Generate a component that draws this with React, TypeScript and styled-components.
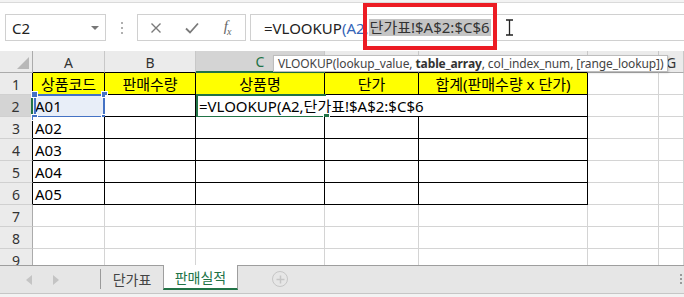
import React from 'react';
import styled, { createGlobalStyle } from 'styled-components';

const Global = createGlobalStyle`
  html, body { margin: 0; padding: 0; background: #fff; }
  body { width: 684px; height: 297px; overflow: hidden; font-family: "Noto Sans", "Noto Sans CJK KR", sans-serif; }
`;

const CELL_FONT = `"Noto Sans", "Noto Sans CJK KR", sans-serif`;
const GREEN = '#217346';
const BLUE = '#4472c4';

const Window = styled.div`
  position: relative;
  width: 684px;
  height: 297px;
  overflow: hidden;
  display: flex;
  flex-direction: column;
  background: #fff;
`;

const TopStrip = styled.div`
  height: 3px;
  background: #f3f3f3;
  border-bottom: 1px solid #dadada;
  box-sizing: border-box;
`;

const Toolbar = styled.div`
  height: 48px;
  display: flex;
  align-items: flex-start;
  padding: 11px 0 0 5px;
  box-sizing: border-box;
`;

const NameBox = styled.div`
  width: 101px;
  height: 27px;
  border: 1px solid #d0d0d0;
  box-sizing: border-box;
  display: flex;
  align-items: center;
  justify-content: space-between;
  padding: 0 6px 0 6px;
  font-family: ${CELL_FONT};
  font-size: 15px;
  color: #222;
`;

const DropTriangle = styled.span`
  width: 0;
  height: 0;
  border-left: 4px solid transparent;
  border-right: 4px solid transparent;
  border-top: 4px solid #777;
`;

const Dots = styled.div`
  width: 31px;
  height: 27px;
  display: flex;
  flex-direction: column;
  align-items: center;
  justify-content: center;
  gap: 3px;
  & > span { width: 2px; height: 2px; background: #b0b0b0; }
`;

const ButtonsBox = styled.div`
  width: 109px;
  height: 27px;
  border: 1px solid #d0d0d0;
  box-sizing: border-box;
  display: flex;
  align-items: center;
`;

const IconSlot = styled.div`
  width: 36px;
  height: 25px;
  display: flex;
  align-items: center;
  justify-content: center;
  color: #7a7a7a;
`;

const Fx = styled.span`
  font-family: "Liberation Serif", serif;
  font-style: italic;
  font-size: 15px;
  color: #666;
  letter-spacing: -1px;
`;

const FxSub = styled.sub`
  font-size: 10px;
`;

const FormulaInput = styled.div`
  flex: 1;
  height: 27px;
  margin-left: 4px;
  border: 1px solid #d0d0d0;
  border-right: none;
  box-sizing: border-box;
  display: flex;
  align-items: center;
  padding-left: 13px;
  font-family: ${CELL_FONT};
  font-size: 15px;
  color: #222;
  white-space: nowrap;
`;

const RefText = styled.span`
  color: #3465b8;
`;

const Selected = styled.span`
  display: inline-block;
  background: #c4c4c4;
  color: #333;
  line-height: 17px;
  padding: 0 1px 0 1px;
`;

const Cursor = styled.svg`
  margin-left: 14px;
`;

const Grid = styled.div`
  display: grid;
  grid-template-columns: 33px 72px 91px 129px 94px 169px 71px 1fr;
  grid-template-rows: repeat(10, 22px);
  height: 214px;
  overflow: hidden;
  font-family: ${CELL_FONT};
`;

const Corner = styled.div`
  position: relative;
  background: #ebebeb;
  border-right: 1px solid #ababab;
  border-bottom: 1px solid #ababab;
  box-sizing: border-box;
  &::after {
    content: '';
    position: absolute;
    right: 3px;
    bottom: 3px;
    width: 0;
    height: 0;
    border-left: 12px solid transparent;
    border-bottom: 12px solid #b8b8b8;
  }
`;

const ColHead = styled.div<{ $active?: boolean; $dark?: boolean }>`
  background: ${p => (p.$active ? '#d4d4d4' : '#ebebeb')};
  border-right: 1px solid #c8c8c8;
  border-bottom: ${p => (p.$active ? `2px solid ${GREEN}` : p.$dark ? '1px solid #000' : '1px solid #ababab')};
  box-sizing: border-box;
  display: flex;
  align-items: center;
  justify-content: center;
  font-family: "Noto Sans", sans-serif;
  font-size: 14px;
  color: ${p => (p.$active ? GREEN : '#333')};
  padding-top: 1px;
`;

const RowHead = styled.div<{ $active?: boolean; $dark?: boolean }>`
  background: ${p => (p.$active ? '#d4d4d4' : '#ebebeb')};
  border-right: ${p => (p.$active ? `2px solid ${GREEN}` : p.$dark ? '1px solid #000' : '1px solid #ababab')};
  border-bottom: 1px solid #d0d0d0;
  box-sizing: border-box;
  display: flex;
  align-items: center;
  justify-content: center;
  font-family: "Noto Sans", sans-serif;
  font-size: 14px;
  color: #333;
  padding-top: 1px;
`;

const Cell = styled.div<{ $table?: boolean; $yellow?: boolean; $center?: boolean; $span?: number; $fill?: string }>`
  position: relative;
  grid-column: span ${p => p.$span ?? 1};
  background: ${p => p.$fill ?? (p.$yellow ? '#ffff00' : '#fff')};
  border-right: 1px solid ${p => (p.$table ? '#000' : '#d4d4d4')};
  border-bottom: 1px solid ${p => (p.$table ? '#000' : '#d4d4d4')};
  box-sizing: border-box;
  display: flex;
  align-items: center;
  justify-content: ${p => (p.$center ? 'center' : 'flex-start')};
  padding-left: ${p => (p.$center ? '0' : '2px')};
  font-size: 15px;
  color: #000;
  white-space: nowrap;
  line-height: 22px;
`;

const Handle = styled.span<{ $color: string; $pos: string }>`
  position: absolute;
  width: 5px;
  height: 5px;
  background: ${p => p.$color};
  border: 1px solid #fff;
  ${p => p.$pos}
`;

const RefFrame = styled.div`
  position: absolute;
  left: 1px;
  top: -1px;
  width: 71px;
  height: 24px;
  border: 2px solid ${BLUE};
  box-sizing: border-box;
  pointer-events: none;
`;

const EditFrame = styled.div`
  position: absolute;
  left: 0;
  top: -1px;
  width: 130px;
  height: 24px;
  border: 2px solid ${GREEN};
  border-right: none;
  box-sizing: border-box;
  pointer-events: none;
`;

const EditText = styled.span`
  padding-left: 1px;
`;

const Tooltip = styled.div`
  position: absolute;
  left: 273px;
  top: 55px;
  height: 17px;
  padding: 0 4px;
  background: #fff;
  border: 1px solid #bdbdbd;
  box-shadow: 1px 1px 2px rgba(0, 0, 0, 0.15);
  box-sizing: border-box;
  font-family: "Noto Sans", sans-serif;
  font-size: 12px;
  letter-spacing: -0.1px;
  line-height: 15px;
  color: #444;
  white-space: nowrap;
  b { font-weight: 700; color: #333; }
`;

const Callout = styled.div`
  position: absolute;
  left: 363px;
  top: 3px;
  width: 134px;
  height: 47px;
  border: 4px solid #ec1c24;
  box-sizing: border-box;
`;

const TabBar = styled.div`
  height: 28px;
  display: flex;
  align-items: flex-start;
  background: #e6e6e6;
  border-top: 1px solid #9e9e9e;
  box-sizing: border-box;
`;

const NavArrows = styled.div`
  width: 100px;
  height: 27px;
  display: flex;
  align-items: center;
  padding-left: 26px;
  gap: 21px;
  box-sizing: border-box;
`;

const Arrow = styled.span<{ $dir: 'l' | 'r' }>`
  width: 0;
  height: 0;
  border-top: 5px solid transparent;
  border-bottom: 5px solid transparent;
  ${p => (p.$dir === 'l' ? 'border-right: 6px solid #c4c4c4;' : 'border-left: 6px solid #c4c4c4;')}
`;

const TabDivider = styled.span`
  width: 1px;
  height: 20px;
  margin-top: 3px;
  background: #9a9a9a;
`;

const Tab = styled.div<{ $active?: boolean }>`
  width: ${p => (p.$active ? '75px' : '62px')};
  height: ${p => (p.$active ? '25px' : '24px')};
  margin-top: ${p => (p.$active ? '-1px' : '0')};
  display: flex;
  align-items: center;
  justify-content: center;
  background: ${p => (p.$active ? '#fff' : 'transparent')};
  border-left: ${p => (p.$active ? '1px solid #9e9e9e' : 'none')};
  border-right: ${p => (p.$active ? '1px solid #9e9e9e' : 'none')};
  border-bottom: ${p => (p.$active ? `2px solid ${GREEN}` : 'none')};
  box-sizing: border-box;
  font-family: ${CELL_FONT};
  font-size: 14px;
  color: ${p => (p.$active ? GREEN : '#444')};
  padding-top: 1px;
`;

const AddSheet = styled.div`
  width: 16px;
  height: 16px;
  margin: 5px 0 0 34px;
  border: 1.5px solid #c6c6c6;
  border-radius: 50%;
  box-sizing: border-box;
  display: flex;
  align-items: center;
  justify-content: center;
  color: #c6c6c6;
`;

const VDots = styled.div`
  margin-left: auto;
  margin-right: 2px;
  margin-top: 8px;
  display: flex;
  flex-direction: column;
  gap: 2px;
  & > span { width: 2px; height: 2px; background: #9a9a9a; }
`;

const StatusStrip = styled.div`
  flex: 1;
  background: #f3f3f3;
  border-top: 1px solid #c6c6c6;
`;

const headers = ['상품코드', '판매수량', '상품명', '단가', '합계(판매수량 x 단가)'];
const cols = ['A', 'B', 'C', 'D', 'E', 'F', 'G'];

function renderRow(r: number) {
  const inTable = r >= 1 && r <= 6;
  const cells: React.ReactNode[] = [];
  cells.push(
    <RowHead key={`h${r}`} $active={r === 2} $dark={inTable}>
      {r}
    </RowHead>
  );
  if (r === 1) {
    headers.forEach((h, i) =>
      cells.push(
        <Cell key={`c${i}`} $table $yellow $center>
          {h}
        </Cell>
      )
    );
  } else if (r === 2) {
    cells.push(
      <Cell key="a" $table $fill="#e8eef8">
        A01
        <RefFrame>
          <Handle $color={BLUE} $pos="left:-5px;top:-5px;" />
          <Handle $color={BLUE} $pos="right:-5px;top:-5px;" />
          <Handle $color={BLUE} $pos="left:-5px;bottom:-5px;" />
          <Handle $color={BLUE} $pos="right:-5px;bottom:-5px;" />
        </RefFrame>
      </Cell>
    );
    cells.push(<Cell key="b" $table />);
    cells.push(
      <Cell key="c" $table $span={3}>
        <EditText>=VLOOKUP(A2,단가표!$A$2:$C$6</EditText>
        <EditFrame>
          <Handle $color={GREEN} $pos="right:-4px;bottom:-4px;" />
        </EditFrame>
      </Cell>
    );
  } else if (inTable) {
    cells.push(
      <Cell key="a" $table>
        {`A0${r - 1}`}
      </Cell>
    );
    for (let i = 1; i < 5; i++) cells.push(<Cell key={`c${i}`} $table />);
  } else {
    for (let i = 0; i < 5; i++) cells.push(<Cell key={`c${i}`} />);
  }
  cells.push(<Cell key="f" />);
  cells.push(<Cell key="g" />);
  return cells;
}

export default function App() {
  return (
    <Window>
      <Global />
      <TopStrip />
      <Toolbar>
        <NameBox>
          C2
          <DropTriangle />
        </NameBox>
        <Dots>
          <span />
          <span />
          <span />
        </Dots>
        <ButtonsBox>
          <IconSlot>
            <svg width="12" height="12" viewBox="0 0 12 12">
              <path d="M1.5 1.5 L10.5 10.5 M10.5 1.5 L1.5 10.5" stroke="#7a7a7a" strokeWidth="1.4" fill="none" />
            </svg>
          </IconSlot>
          <IconSlot>
            <svg width="14" height="12" viewBox="0 0 14 12">
              <path d="M1 6.5 L5 10.5 L13 1.5" stroke="#7a7a7a" strokeWidth="1.8" fill="none" />
            </svg>
          </IconSlot>
          <IconSlot>
            <Fx>
              f<FxSub>x</FxSub>
            </Fx>
          </IconSlot>
        </ButtonsBox>
        <FormulaInput>
          =VLOOKUP<RefText>(A2</RefText>,<Selected>단가표!$A$2:$C$6</Selected>
          <Cursor width="9" height="17" viewBox="0 0 9 17">
            <path d="M1 1 H8 M4.5 1 V16 M1 16 H8" stroke="#222" strokeWidth="1.3" fill="none" />
          </Cursor>
        </FormulaInput>
      </Toolbar>
      <Grid>
        <Corner />
        {cols.map((c, i) => (
          <ColHead key={c} $active={c === 'C'} $dark={i < 5}>
            {c}
          </ColHead>
        ))}
        {Array.from({ length: 9 }, (_, i) => renderRow(i + 1))}
      </Grid>
      <TabBar>
        <NavArrows>
          <Arrow $dir="l" />
          <Arrow $dir="r" />
        </NavArrows>
        <TabDivider />
        <Tab>단가표</Tab>
        <Tab $active>판매실적</Tab>
        <AddSheet>
          <svg width="9" height="9" viewBox="0 0 9 9">
            <path d="M4.5 0.5 V8.5 M0.5 4.5 H8.5" stroke="#c6c6c6" strokeWidth="1.5" />
          </svg>
        </AddSheet>
        <VDots>
          <span />
          <span />
          <span />
        </VDots>
      </TabBar>
      <StatusStrip />
      <Tooltip>
        VLOOKUP(lookup_value, <b>table_array</b>, col_index_num, [range_lookup])
      </Tooltip>
      <Callout />
    </Window>
  );
}
